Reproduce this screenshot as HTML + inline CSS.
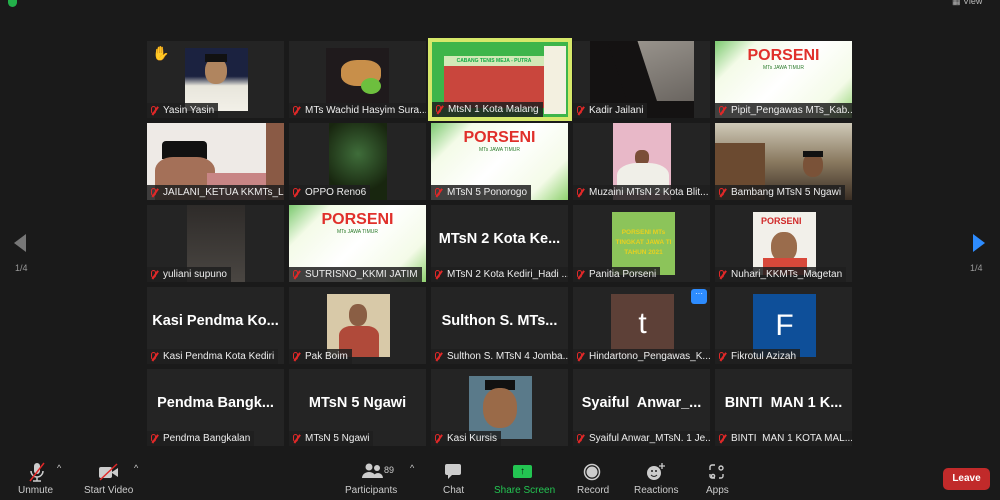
<!DOCTYPE html>
<html><head><style>
body{margin:0;width:1000px;height:500px;background:#1a1a1a;font-family:"Liberation Sans",Arial,sans-serif;overflow:hidden;position:relative;color:#fff}
.t{position:absolute;width:137px;height:77px;background:#242424;overflow:hidden}
.img{position:absolute;top:7px;width:63px;height:63px;overflow:hidden}
.lb{position:absolute;left:0;bottom:0;height:15px;background:rgba(30,30,30,.85);font-size:10px;line-height:15px;padding:0 4px 0 16px;white-space:nowrap;color:#eee;max-width:117px;overflow:hidden}
.lb:before{content:"";position:absolute;left:4px;top:3px;width:5px;height:8px;border:1.5px solid #e02828;border-radius:3px;box-sizing:border-box}
.lb:after{content:"";position:absolute;left:3px;top:7px;width:10px;height:1.5px;background:#e02828;transform:rotate(-55deg)}
.big{position:absolute;left:0;right:0;top:26px;text-align:center;font-weight:bold;font-size:14.5px;color:#fff;white-space:nowrap}
.por{background:linear-gradient(135deg,#7bc96f 0%,#f4fbe8 20%,#ffffff 50%,#f4fbe8 80%,#8fd16f 100%)}
.por b{position:absolute;left:0;right:0;top:6px;text-align:center;color:#e0302b;font-size:16px;font-weight:900}
.por i{position:absolute;left:0;right:0;top:24px;text-align:center;color:#2a7a2a;font-size:5px;font-style:normal}
.tb{position:absolute;color:#ccc;font-size:10px;text-align:center}
</style></head><body>
<div style="position:absolute;left:8px;top:-2px;width:9px;height:9px;background:#23b04a;border-radius:0 0 5px 5px"></div>
<div style="position:absolute;left:952px;top:-4px;font-size:9px;color:#bbb">▦ View</div>

<div style="position:absolute;left:14px;top:234px;width:0;height:0;border-top:9px solid transparent;border-bottom:9px solid transparent;border-right:12px solid #777"></div>
<div style="position:absolute;left:15px;top:263px;font-size:9px;color:#999">1/4</div>
<div style="position:absolute;left:973px;top:234px;width:0;height:0;border-top:9px solid transparent;border-bottom:9px solid transparent;border-left:12px solid #2d8cff"></div>
<div style="position:absolute;left:970px;top:263px;font-size:9px;color:#999">1/4</div>

<!-- row1 -->
<div class="t" style="left:147px;top:41px"><div class="img" style="left:38px;background:linear-gradient(#1b2240 0%,#1b2240 45%,#e8e6dc 60%,#f2f0e8 100%)"><div style="position:absolute;left:20px;top:10px;width:22px;height:26px;background:#b0855f;border-radius:45%"></div><div style="position:absolute;left:20px;top:6px;width:22px;height:8px;background:#111"></div></div><div style="position:absolute;left:5px;top:4px;font-size:14px">✋</div><div class="lb">Yasin Yasin</div></div>
<div class="t" style="left:289px;top:41px"><div class="img" style="left:37px;background:#1f1a1c"><div style="position:absolute;left:15px;top:12px;width:40px;height:26px;background:#c88f4a;border-radius:40%"></div><div style="position:absolute;left:35px;top:30px;width:20px;height:16px;background:#6dbf3e;border-radius:50%"></div></div><div class="lb">MTs Wachid Hasyim Sura...</div></div>
<div class="t" style="left:428px;top:38px;width:144px;height:83px;background:#d6e86a"><div style="position:absolute;left:4px;top:4px;width:136px;height:75px;background:#3db54a"><div style="position:absolute;left:12px;top:14px;width:100px;height:52px;background:#c9463d"></div><div style="position:absolute;left:12px;top:14px;width:100px;height:10px;background:#d2e9b7;color:#1a4;font-size:5px;text-align:center;line-height:10px;font-weight:bold">CABANG TENIS MEJA - PUTRA</div><div style="position:absolute;left:112px;top:4px;width:22px;height:68px;background:#f3f0e0"></div></div><div class="lb" style="bottom:4px;left:4px">MtsN 1 Kota Malang</div></div>
<div class="t" style="left:573px;top:41px"><div class="img" style="left:17px;top:0;width:104px;height:77px;background:#141212"><div style="position:absolute;left:38px;top:0;width:66px;height:60px;background:linear-gradient(160deg,#9a958e,#6a6560)"></div><div style="position:absolute;left:30px;top:0;width:30px;height:77px;background:#141212;transform:skewX(18deg)"></div></div><div class="lb">Kadir Jailani</div></div>
<div class="t por" style="left:715px;top:41px"><b>PORSENI</b><i>MTs JAWA TIMUR</i><div class="lb">Pipit_Pengawas MTs_Kab...</div></div>

<!-- row2 -->
<div class="t" style="left:147px;top:123px;background:#eeeae6"><div style="position:absolute;left:15px;top:18px;width:45px;height:18px;background:#111;border-radius:4px 4px 0 0"></div><div style="position:absolute;left:8px;top:34px;width:60px;height:45px;background:#a47058;border-radius:30% 30% 0 0"></div><div style="position:absolute;left:60px;top:50px;width:77px;height:27px;background:#c88585"></div><div style="position:absolute;right:0;top:0;width:18px;height:77px;background:#8a5a45"></div><div class="lb">JAILANI_KETUA KKMTs_L...</div></div>
<div class="t" style="left:289px;top:123px"><div class="img" style="left:40px;top:0;width:58px;height:77px;background:radial-gradient(circle at 50% 40%,#3f6d3a,#18260f 70%)"></div><div class="lb">OPPO Reno6</div></div>
<div class="t por" style="left:431px;top:123px"><b>PORSENI</b><i>MTs JAWA TIMUR</i><div class="lb">MTsN 5 Ponorogo</div></div>
<div class="t" style="left:573px;top:123px"><div class="img" style="left:40px;top:0;width:58px;height:77px;background:#e8b8c8"><div style="position:absolute;left:22px;top:27px;width:14px;height:15px;background:#7a4e38;border-radius:40%"></div><div style="position:absolute;left:4px;top:40px;width:52px;height:30px;background:#f0efe8;border-radius:40% 40% 0 0"></div></div><div class="lb">Muzaini MTsN 2 Kota Blit...</div></div>
<div class="t" style="left:715px;top:123px;background:linear-gradient(#cfc9b8,#8a7a60 50%,#3a2e24)"><div style="position:absolute;left:0;top:20px;width:50px;height:57px;background:#6b4a30"></div><div style="position:absolute;left:88px;top:30px;width:20px;height:24px;background:#7a5238;border-radius:45%"></div><div style="position:absolute;left:88px;top:28px;width:20px;height:6px;background:#111"></div><div class="lb">Bambang MTsN 5 Ngawi</div></div>

<!-- row3 -->
<div class="t" style="left:147px;top:205px"><div class="img" style="left:40px;top:0;width:58px;height:77px;background:linear-gradient(#2e2b29,#4a4642)"></div><div class="lb">yuliani supuno</div></div>
<div class="t por" style="left:289px;top:205px"><b>PORSENI</b><i>MTs JAWA TIMUR</i><div class="lb">SUTRISNO_KKMI JATIM</div></div>
<div class="t" style="left:431px;top:205px"><div class="big">MTsN 2 Kota Ke...</div><div class="lb">MTsN 2 Kota Kediri_Hadi ...</div></div>
<div class="t" style="left:573px;top:205px"><div class="img" style="left:39px;background:#8cc45a"><div style="color:#e8d020;font-size:6.5px;font-weight:bold;text-align:center;margin-top:16px;line-height:10px;white-space:nowrap">PORSENI MTs<br>TINGKAT JAWA TI<br>TAHUN 2021</div></div><div class="lb">Panitia Porseni</div></div>
<div class="t" style="left:715px;top:205px"><div class="img" style="left:38px;background:#f2f0ea"><div style="color:#d02a2a;font-size:9px;font-weight:900;margin:4px 0 0 8px">PORSENI</div><div style="position:absolute;left:18px;top:20px;width:26px;height:30px;background:#9a6c4c;border-radius:45%"></div><div style="position:absolute;left:10px;top:46px;width:44px;height:17px;background:#d8483a"></div></div><div class="lb">Nuhari_KKMTs_Magetan</div></div>

<!-- row4 -->
<div class="t" style="left:147px;top:287px"><div class="big">Kasi Pendma Ko...</div><div class="lb">Kasi Pendma Kota Kediri</div></div>
<div class="t" style="left:289px;top:287px"><div class="img" style="left:38px;background:#d8c9a8"><div style="position:absolute;left:22px;top:10px;width:18px;height:22px;background:#8a5e44;border-radius:45%"></div><div style="position:absolute;left:12px;top:32px;width:40px;height:31px;background:#b04a3a;border-radius:30% 30% 0 0"></div></div><div class="lb">Pak Boim</div></div>
<div class="t" style="left:431px;top:287px"><div class="big">Sulthon S. MTs...</div><div class="lb">Sulthon S. MTsN 4 Jomba...</div></div>
<div class="t" style="left:573px;top:287px"><div class="img" style="left:38px;background:#5d4037;text-align:center;font-size:30px;line-height:60px">t</div><div style="position:absolute;left:118px;top:2px;width:16px;height:15px;background:#2d8cff;border-radius:3px;font-size:8px;text-align:center;line-height:10px">···</div><div class="lb">Hindartono_Pengawas_K...</div></div>
<div class="t" style="left:715px;top:287px"><div class="img" style="left:38px;background:#0e4f99;text-align:center;font-size:30px;line-height:63px">F</div><div class="lb">Fikrotul Azizah</div></div>

<!-- row5 -->
<div class="t" style="left:147px;top:369px"><div class="big">Pendma Bangk...</div><div class="lb">Pendma Bangkalan</div></div>
<div class="t" style="left:289px;top:369px"><div class="big">MTsN 5 Ngawi</div><div class="lb">MTsN 5 Ngawi</div></div>
<div class="t" style="left:431px;top:369px"><div class="img" style="left:38px;background:#5a7a8a"><div style="position:absolute;left:16px;top:4px;width:30px;height:10px;background:#111"></div><div style="position:absolute;left:14px;top:12px;width:34px;height:40px;background:#9a6a48;border-radius:45%"></div></div><div class="lb">Kasi Kursis</div></div>
<div class="t" style="left:573px;top:369px"><div class="big">Syaiful&nbsp; Anwar_...</div><div class="lb">Syaiful Anwar_MTsN. 1 Je...</div></div>
<div class="t" style="left:715px;top:369px"><div class="big">BINTI&nbsp; MAN 1 K...</div><div class="lb">BINTI&nbsp; MAN 1 KOTA MAL...</div></div>

<!-- toolbar -->
<svg style="position:absolute;left:28px;top:462px" width="18" height="20" viewBox="0 0 18 20"><rect x="6" y="1" width="6" height="11" rx="3" fill="#ccc"/><path d="M3 9a6 6 0 0 0 12 0M9 15v4M5 19h8" stroke="#ccc" stroke-width="1.5" fill="none"/><path d="M2 19L16 1" stroke="#e02828" stroke-width="1.5"/></svg>
<div class="tb" style="left:18px;top:485px">Unmute</div>
<div class="tb" style="left:57px;top:463px;font-size:9px">^</div>
<svg style="position:absolute;left:98px;top:463px" width="22" height="18" viewBox="0 0 22 18"><rect x="1" y="4" width="13" height="11" rx="2" fill="#ccc"/><path d="M14 9l6-4v9l-6-4z" fill="#ccc"/><path d="M2 17L19 1" stroke="#e02828" stroke-width="1.5"/></svg>
<div class="tb" style="left:84px;top:485px">Start Video</div>
<div class="tb" style="left:134px;top:463px;font-size:9px">^</div>
<svg style="position:absolute;left:361px;top:463px" width="22" height="16" viewBox="0 0 22 16"><circle cx="8" cy="4" r="3.5" fill="#ccc"/><path d="M1 15a7 6 0 0 1 14 0z" fill="#ccc"/><circle cx="16" cy="5" r="3" fill="#ccc"/><path d="M12 15a5 5 0 0 1 10 0z" fill="#ccc"/></svg>
<div class="tb" style="left:384px;top:465px;font-size:9px">89</div>
<div class="tb" style="left:345px;top:485px">Participants</div>
<div class="tb" style="left:410px;top:463px;font-size:9px">^</div>
<svg style="position:absolute;left:444px;top:463px" width="18" height="17" viewBox="0 0 18 17"><path d="M3 1h12a2 2 0 0 1 2 2v7a2 2 0 0 1-2 2H8l-4 4v-4H3a2 2 0 0 1-2-2V3a2 2 0 0 1 2-2z" fill="#ccc"/></svg>
<div class="tb" style="left:443px;top:485px">Chat</div>
<div style="position:absolute;left:513px;top:465px;width:19px;height:13px;background:#23c552;border-radius:2px;color:#111;font-size:10px;text-align:center;line-height:13px;font-weight:bold">↑</div>
<div class="tb" style="left:494px;top:485px;color:#23c552">Share Screen</div>
<svg style="position:absolute;left:583px;top:463px" width="18" height="18"><circle cx="9" cy="9" r="7.5" stroke="#ccc" stroke-width="1.5" fill="none"/><circle cx="9" cy="9" r="5.5" fill="#ccc"/></svg>
<div class="tb" style="left:577px;top:485px">Record</div>
<svg style="position:absolute;left:646px;top:462px" width="20" height="20"><circle cx="8" cy="11" r="7" fill="#ccc"/><circle cx="6" cy="9" r="1" fill="#222"/><circle cx="10" cy="9" r="1" fill="#222"/><path d="M5 13q3 3 6 0" stroke="#222" fill="none"/><path d="M16 1v6M13 4h6" stroke="#ccc" stroke-width="1.3"/></svg>
<div class="tb" style="left:634px;top:485px">Reactions</div>
<svg style="position:absolute;left:709px;top:464px" width="16" height="16" fill="none" stroke="#ccc" stroke-width="1.4"><path d="M6 1H3a2 2 0 0 0-2 2v3M1 10v2a2 2 0 0 0 2 2h3M10 14h2a2 2 0 0 0 2-2v-2"/><circle cx="12" cy="4" r="2"/><circle cx="4" cy="12" r="1.6"/></svg>
<div class="tb" style="left:706px;top:485px">Apps</div>
<div style="position:absolute;left:943px;top:468px;width:47px;height:22px;background:#c12a2a;border-radius:5px;font-size:10px;font-weight:bold;text-align:center;line-height:22px">Leave</div>
</body></html>
